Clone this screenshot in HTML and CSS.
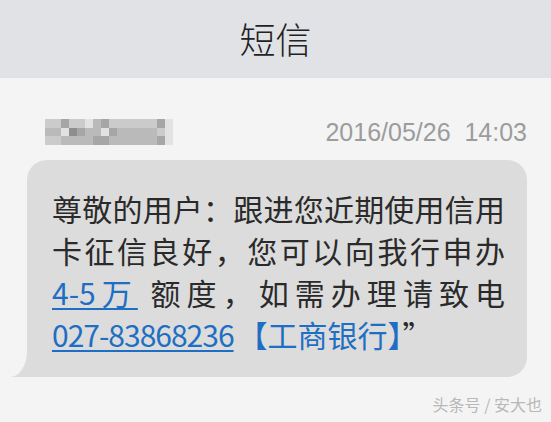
FILE: index.html
```html
<!DOCTYPE html>
<html lang="zh-CN">
<head>
    <meta charset="UTF-8">
    <meta name="viewport" content="width=device-width, initial-scale=1.0">
    <title>短信</title>
    <link rel="stylesheet" href="styles.css">
</head>
<body>
    <header class="title-bar">短信</header>

    <main class="thread">
        <div class="meta">
            <div class="sender">
                <span class="s2"></span><span class="s2"></span><span class="s4"></span><span class="s2"></span><span class="s2"></span><span class="s1"></span><span class="s3"></span><span class="s4"></span><span class="s2"></span><span class="s2"></span><span class="s2"></span><span class="s2"></span><span class="s2"></span><span class="s2"></span><span class="s4"></span><span class="s1"></span>
                <span class="s3"></span><span class="s3"></span><span class="s1"></span><span class="s5"></span><span class="s4"></span><span class="s3"></span><span class="s3"></span><span class="s1"></span><span class="s4"></span><span class="s3"></span><span class="s3"></span><span class="s3"></span><span class="s3"></span><span class="s3"></span><span class="s2"></span><span class="s1"></span>
                <span class="s2"></span><span class="s2"></span><span class="s3"></span><span class="s3"></span><span class="s3"></span><span class="s3"></span><span class="s4"></span><span class="s4"></span><span class="s3"></span><span class="s3"></span><span class="s3"></span><span class="s3"></span><span class="s3"></span><span class="s3"></span><span class="s4"></span><span class="s1"></span>
            </div>
            <div class="time">2016/05/26&nbsp;&nbsp;14:03</div>
        </div>

        <div class="bubble">
            <div class="line full">尊敬的用户：跟进您近期使用信用</div>
            <div class="line full">卡征信良好，您可以向我行申办</div>
            <div class="line full"><a href="#">4-5万</a> 额度，如需办理请致电</div>
            <div class="line"><a href="#" class="phone">027-83868236</a><span class="bank">【工商银行】</span>”</div>
        </div>

        <div class="credit">头条号 / 安大也</div>
    </main>
</body>
</html>
```

FILE: styles.css
```css
body {
    margin: 0;
    background-color: #f4f4f4;
    font-family: "Noto Sans CJK SC", "Noto Sans", sans-serif;
    overflow: hidden;
}
.title-bar {
    height: 78px;
    line-height: 76px;
    text-align: center;
    background-color: #e1e2e6;
    color: #222;
    font-size: 36px;
    font-weight: 300;
}
.thread {
    padding-top: 40px;
}
.meta {
    display: flex;
    justify-content: space-between;
    align-items: center;
    padding: 0 24px 0 45px;
    height: 28px;
}
.sender {
    display: grid;
    grid-template-columns: repeat(16, 8px);
    grid-auto-rows: 8.7px;
}
.s1 { background-color: #e2e2e2; }
.s2 { background-color: #cbcbcb; }
.s3 { background-color: #bababa; }
.s4 { background-color: #a6a6a6; }
.s5 { background-color: #8e8e8e; }
.time {
    font-family: "Liberation Sans", Arial, sans-serif;
    font-size: 25px;
    color: #9c9c9c;
}
.bubble {
    position: relative;
    margin: 14px 24px 0 27px;
    padding: 27px 22px 22px 25px;
    background-color: #dcdcdc;
    border-radius: 20px 20px 20px 0;
    color: #2a2a2a;
    font-size: 30px;
    line-height: 42px;
}
.bubble::before {
    content: "";
    position: absolute;
    left: -17px;
    bottom: 0;
    width: 30px;
    height: 26px;
    background-color: #dcdcdc;
}
.bubble::after {
    content: "";
    position: absolute;
    left: -30px;
    bottom: 0;
    width: 30px;
    height: 26px;
    background-color: #f4f4f4;
    border-bottom-right-radius: 17px 26px;
}
.line {
    white-space: nowrap;
}
.line.full {
    text-align: justify;
    text-align-last: justify;
}
.bubble a {
    color: #1e6fc3;
    text-decoration: underline;
    text-decoration-thickness: 2px;
    text-underline-offset: 3px;
}
.phone {
    letter-spacing: -1px;
}
.bank {
    color: #1e6fc3;
    margin-left: 4px;
}
.credit {
    margin: 15px 9px 0 0;
    text-align: right;
    font-size: 16px;
    color: #b8b8b8;
}
```
